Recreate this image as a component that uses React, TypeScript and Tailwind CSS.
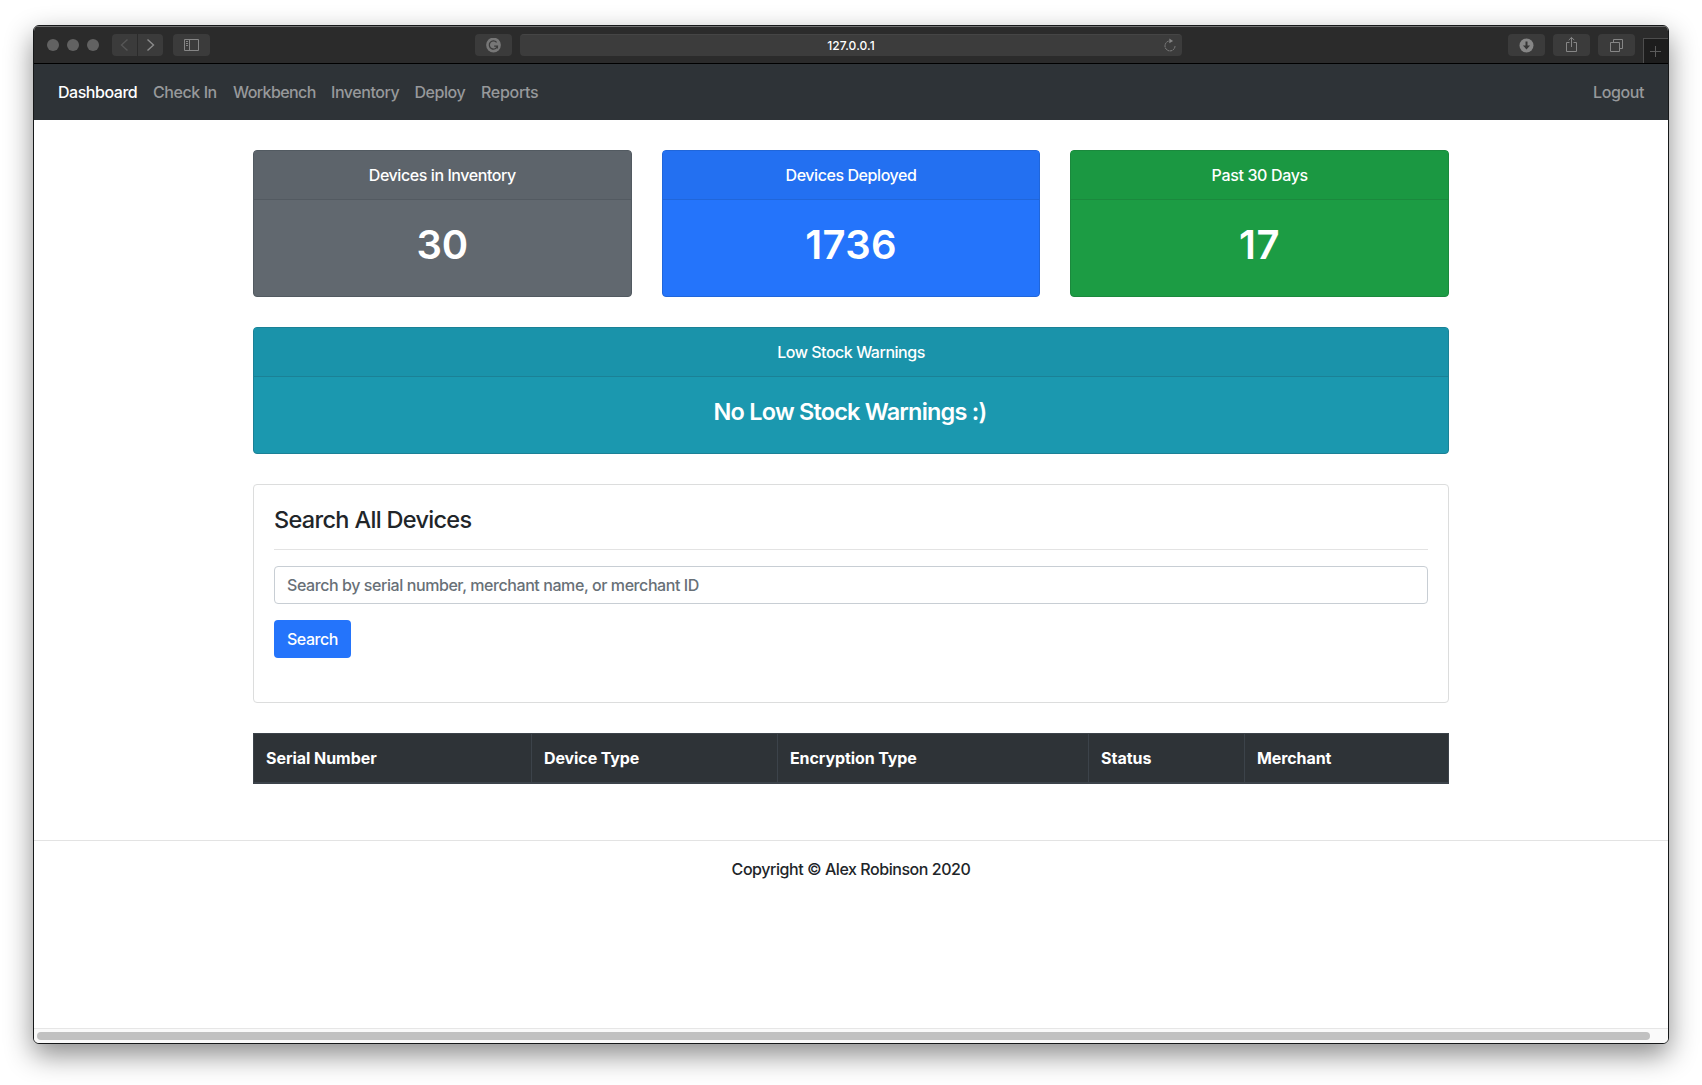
import type { ReactNode } from "react";

function ToolButton({ className = "", children }: { className?: string; children: ReactNode }) {
  return (
    <button className={`flex h-[22px] w-[37px] items-center justify-center rounded bg-[#3b3b3b] ${className}`}>
      {children}
    </button>
  );
}

function Toolbar() {
  return (
    <div className="relative flex h-[38px] items-center border-t border-b border-t-[#727272] border-b-black bg-[#2b2b2b] pl-[13px]">
      <div className="flex gap-2">
        <span className="size-3 rounded-full bg-[#626262]" />
        <span className="size-3 rounded-full bg-[#626262]" />
        <span className="size-3 rounded-full bg-[#626262]" />
      </div>
      <div className="ml-[13px] flex gap-px">
        <button className="flex h-[22px] w-[25px] items-center justify-center rounded-l bg-[#3b3b3b]">
          <svg width="9" height="14" viewBox="0 0 9 14" fill="none" stroke="#565656" strokeWidth="1.4">
            <path d="M7.5 1.5 1.5 7l6 5.5" />
          </svg>
        </button>
        <button className="flex h-[22px] w-[25px] items-center justify-center rounded-r bg-[#3b3b3b]">
          <svg width="9" height="14" viewBox="0 0 9 14" fill="none" stroke="#8b8b8b" strokeWidth="1.4">
            <path d="M1.5 1.5l6 5.5-6 5.5" />
          </svg>
        </button>
      </div>
      <ToolButton className="ml-[10px]">
        <svg width="15" height="12" viewBox="0 0 15 12" fill="none" stroke="#868686">
          <path d="M.5.5h14v11H.5zM5.5.5v11M2 2.5h2M2 4.5h2M2 6.5h2" />
        </svg>
      </ToolButton>
      <ToolButton className="ml-[265px]">
        <svg width="15" height="15" viewBox="0 0 15 15" fill="none">
          <circle cx="7.5" cy="7" r="7.4" fill="#777777" />
          <path d="M10.6 4.4A4.1 4.1 0 1 0 11.4 8.1H8.2M11.4 7.6v3" stroke="#3b3b3b" strokeWidth="1.3" />
        </svg>
      </ToolButton>
      <div className="relative ml-2 flex h-[22px] w-[662px] items-center justify-center rounded border-t border-[#454545] bg-[#3c3c3c]">
        <span className="text-xs font-medium tracking-[0.1px] text-white">127.0.0.1</span>
        <svg className="absolute top-[3px] right-[5px]" width="14" height="15" viewBox="0 0 14 15" fill="none">
          <path d="M5.6 3.1a5 5 0 1 0 6.4 5.1" stroke="#858585" strokeDasharray="2.2 .6" />
          <path d="M6.3.6 10.1 3 6.3 5.2z" fill="#858585" />
        </svg>
      </div>
      <ToolButton className="ml-[326px]">
        <svg width="15" height="15" viewBox="0 0 15 15">
          <circle cx="7.5" cy="7.5" r="7" fill="#868686" />
          <path d="M6.5 3.5h2v4h2.6L7.5 11.4 3.9 7.5h2.6z" fill="#363636" />
        </svg>
      </ToolButton>
      <ToolButton className="ml-2">
        <svg width="13" height="17" viewBox="0 0 13 17" fill="none" stroke="#868686" className="-mt-px">
          <path d="M4.5 6.5h-3v9h10v-9h-3M6.5 11V1.5M3.7 4.2l2.8-2.8 2.8 2.8" />
        </svg>
      </ToolButton>
      <ToolButton className="ml-2">
        <svg width="13" height="13" viewBox="0 0 13 13" fill="none" stroke="#868686">
          <path d="M.5 3.5h9v9h-9zM3.5 3.5v-3h9v9h-3" />
        </svg>
      </ToolButton>
      <button className="absolute right-0 bottom-0 flex h-[25px] w-[25px] items-center justify-center border-t border-l border-[#4d4d4d] bg-[#1d1d1d]">
        <svg className="mr-px" width="11" height="11" viewBox="0 0 11 11" stroke="#5c5c5c">
          <path d="M5.5 0v11M0 5.5h11" />
        </svg>
      </button>
    </div>
  );
}

const links = [
  { label: "Dashboard", style: "w-[79px] text-white tracking-[-0.46px]" },
  { label: "Check In", style: "w-16 tracking-[-0.42px]" },
  { label: "Workbench", style: "w-[82px] tracking-[-0.6px]" },
  { label: "Inventory", style: "w-[67.5px] tracking-[-0.43px]" },
  { label: "Deploy", style: "w-[50.5px] tracking-[-0.44px]" },
  { label: "Reports", style: "w-[57px] tracking-[-0.3px]" },
];

function Navbar() {
  return (
    <nav className="flex h-14 items-center bg-[#2e3337] px-6 text-[#97999b]">
      <div className="flex gap-4">
        {links.map((l) => (
          <a key={l.label} className={`whitespace-nowrap ${l.style}`}>{l.label}</a>
        ))}
      </div>
      <a className="ml-auto tracking-[-0.4px]">Logout</a>
    </nav>
  );
}

function StatCard({ title, value, card, header, titleStyle }: { title: string; value: string; card: string; header: string; titleStyle: string }) {
  return (
    <section className={`h-[147px] flex-1 rounded border text-center text-white ${card}`}>
      <h2 className={`h-[49px] border-b pt-3 font-[450] ${header} ${titleStyle}`}>{title}</h2>
      <p className="pt-[21px] text-[40px] leading-[48px] font-semibold">{value}</p>
    </section>
  );
}

const columns = [
  { label: "Serial Number", width: "w-[278px] tracking-[-0.05px]" },
  { label: "Device Type", width: "w-[246px] tracking-[-0.1px]" },
  { label: "Encryption Type", width: "w-[311px] tracking-[-0.1px]" },
  { label: "Status", width: "w-[156px]" },
  { label: "Merchant", width: "w-[203px] tracking-[-0.1px]" },
];

export default function App() {
  return (
    <div className="h-[1085px] overflow-hidden bg-white px-[33px] pt-[25px] font-['Inter',sans-serif] text-base leading-6 font-[450] text-[#212529]">
      <div className="flex h-[1019px] flex-col overflow-hidden rounded-[6px] border border-[#161819] bg-white shadow-[0_11px_28px_rgba(0,0,0,0.46)]">
        <Toolbar />
        <Navbar />
        <main className="mx-auto mt-[30px] w-[1196px]">
          <div className="flex gap-[30px]">
            <StatCard title="Devices in Inventory" value="30" card="border-[#525a61] bg-[#61686f]" header="border-[#535a61] bg-[#5d646b]" titleStyle="tracking-[-0.42px]" />
            <StatCard title="Devices Deployed" value="1736" card="border-[#2066da] bg-[#2474fb] tracking-[0.3px]" header="border-[#2066da] bg-[#2370f1]" titleStyle="tracking-[-0.43px]" />
            <StatCard title="Past 30 Days" value="17" card="border-[#1b893d] bg-[#1c9c44] tracking-[0.8px]" header="border-[#1b893d] bg-[#1b9842]" titleStyle="tracking-[-0.35px]" />
          </div>
          <section className="mt-[30px] h-[127px] rounded border border-[#1b8196] bg-[#1b98af] text-center text-white">
            <h2 className="h-[49px] border-b border-[#1b8196] bg-[#1a93aa] pt-3 tracking-[-0.47px]">Low Stock Warnings</h2>
            <p className="pt-5 pr-[2px] text-[23.5px] leading-[29px] font-semibold tracking-[-0.8px]">No Low Stock Warnings :)</p>
          </section>
          <section className="mt-[30px] h-[219px] rounded border border-[#dcdddd] px-5 pt-5">
            <h2 className="text-[23.5px] leading-[29px] font-medium tracking-[-0.68px]">Search All Devices</h2>
            <hr className="mt-[15px] border-[#e3e3e3]" />
            <input
              className="mt-4 block h-[38px] w-full rounded border border-[#c8ced4] px-3 tracking-[-0.42px] placeholder:text-[#687077]"
              placeholder="Search by serial number, merchant name, or merchant ID"
            />
            <button className="mt-4 h-[38px] w-[77px] rounded bg-[#2474fb] tracking-[-0.43px] text-white">Search</button>
          </section>
          <div className="mt-[30px] flex h-[51px] border border-b-2 border-[#3c434a] bg-[#2e3337] font-bold text-white">
            {columns.map((c) => (
              <div key={c.label} className={`shrink-0 border-r border-[#3c434a] pt-3 pl-3 last:border-r-0 ${c.width}`}>{c.label}</div>
            ))}
          </div>
        </main>
        <footer className="mt-[56px] border-t border-[#e3e3e3] pt-4 text-center tracking-[-0.45px]">
          Copyright © Alex Robinson 2020
        </footer>
        <div className="mt-auto h-[15px] shrink-0 border-t border-[#e6e6e6] bg-[#fafafa] pt-[3px] pl-[3px]">
          <div className="h-2 w-[1613px] rounded-full bg-[#c1c1c1]" />
        </div>
      </div>
    </div>
  );
}
